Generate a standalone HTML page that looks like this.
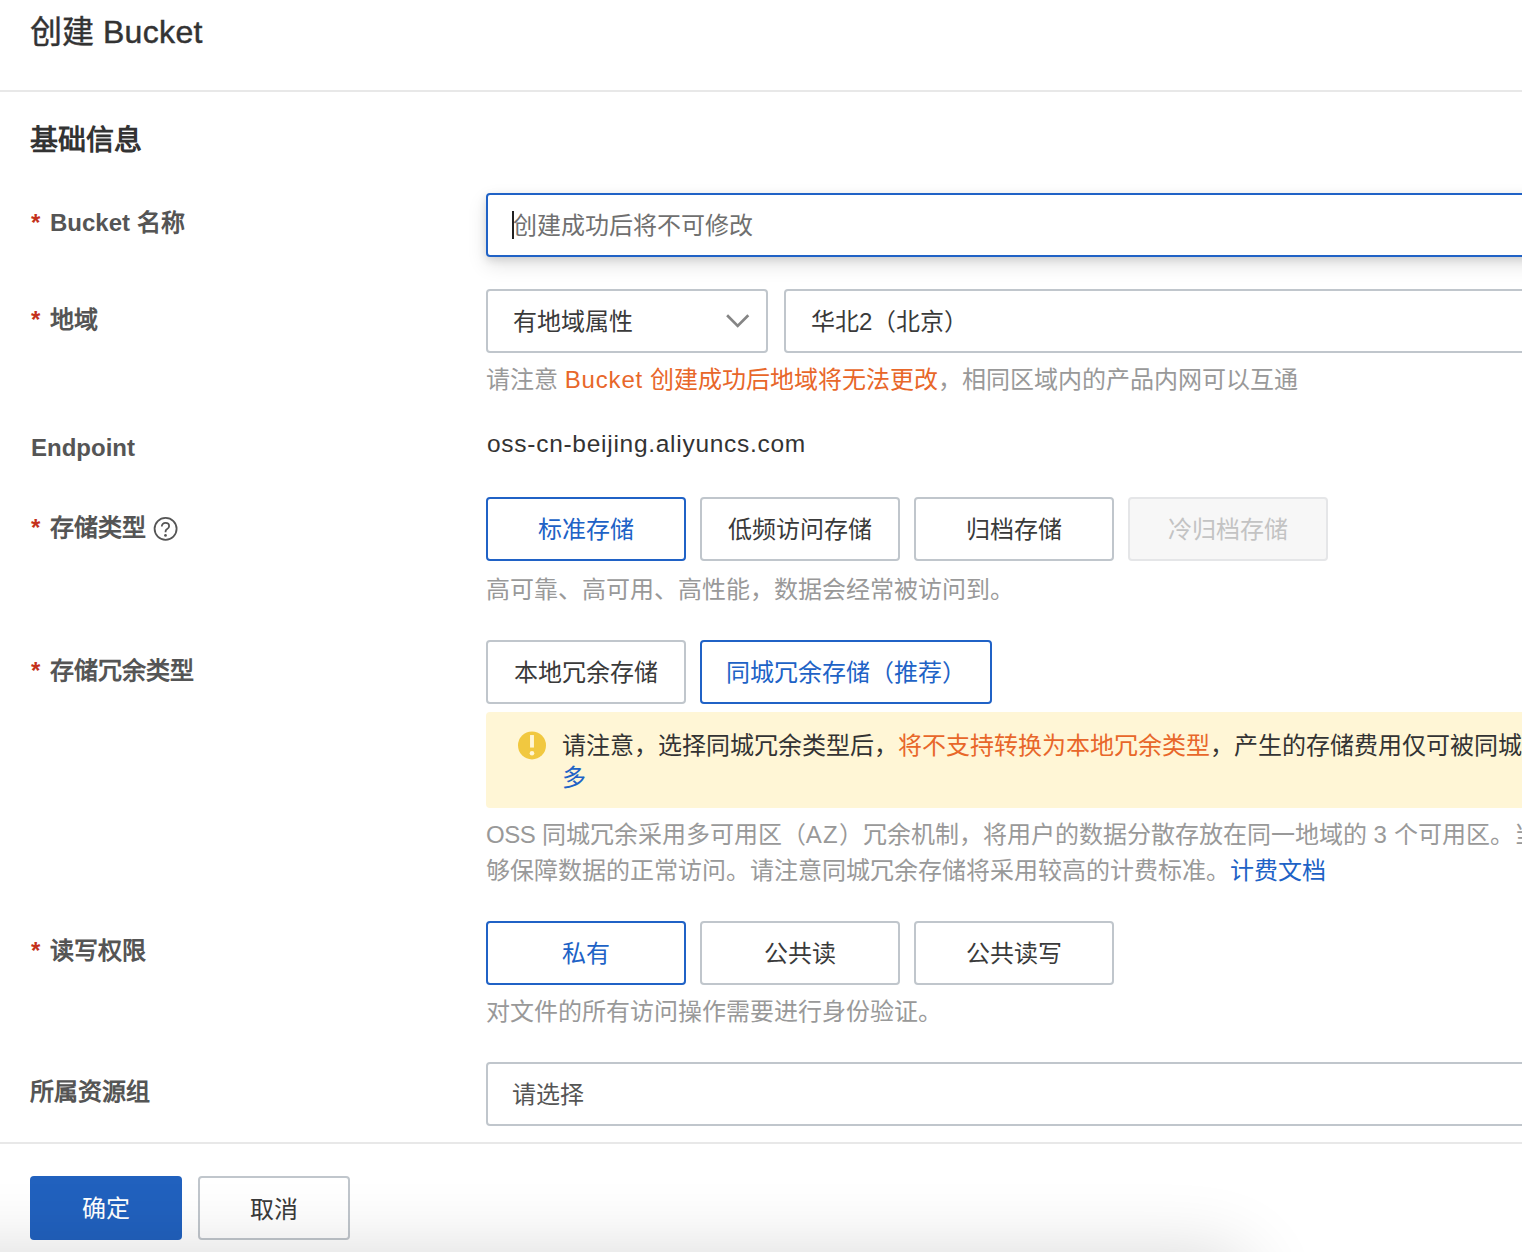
<!DOCTYPE html>
<html lang="zh-CN">
<head>
<meta charset="utf-8">
<title>创建 Bucket</title>
<style>
*{box-sizing:border-box;margin:0;padding:0}
html,body{width:1522px;height:1252px;overflow:hidden;background:#fff}
body{position:relative;font-family:"Liberation Sans",sans-serif;font-size:24px;color:#333;-webkit-font-smoothing:antialiased}
.abs{position:absolute;white-space:nowrap}
.title{left:30px;top:8px;font-size:32px;line-height:48px;color:#333;-webkit-text-stroke:0.45px #333}
.hr{left:0;width:1522px;height:2px;background:#e8e8e8}
.sec{left:30px;top:120px;font-size:28px;line-height:42px;font-weight:bold;color:#333}
.lab{left:30px;font-size:24px;line-height:36px;font-weight:bold;color:#555}
.lab .st{color:#c4311c;margin-right:10px;margin-left:1px;font-weight:bold;font-size:24px;display:inline-block;width:9px;position:relative;top:0px;line-height:1}
.help{left:486px;font-size:24px;line-height:36px;color:#999}
.or{color:#e8672a}
.lk{color:#2062c6}
.box{border:2px solid #c0c6cc;border-radius:4px;background:#fff;height:64px;line-height:62px;font-size:24px;color:#3a3a3a}
.btn{text-align:center;width:200px;line-height:62px}
.btn.on{border-color:#2062c6;color:#2062c6}
.btn.dis{background:#f7f7f7;border-color:#e5e6e8;color:#c3c3c3}
.focus{border-color:#2062c6;box-shadow:0 3px 8px rgba(0,0,0,.12),0 8px 20px rgba(0,0,0,.11);padding-left:25px}
.caret{position:absolute;left:24px;top:16px;width:2px;height:28px;background:#222}
.ph{color:#707070}
.chev{position:absolute;right:15px;top:22px}
.val{font-size:24px;line-height:36px;color:#333}
.warn{background:#fff6d6;border-radius:4px}
.wt{font-size:24px;line-height:34px;color:#333}
.foot{left:0;top:1144px;width:1522px;height:108px;background:#fff}
.ok{left:30px;top:1176px;width:152px;height:64px;line-height:66px;border-radius:4px;background:#2161be;color:#fff;text-align:center;font-size:24px}
.cancel{color:#3a3a3a;line-height:64px}
.shade{left:-300px;top:1254px;width:1548px;height:300px;border-radius:30px;box-shadow:0 0 75px 0 rgba(0,0,0,.16);pointer-events:none}
</style>
</head>
<body>
<div class="abs title">创建 <span style="letter-spacing:.35px">Bucket</span></div>
<div class="abs hr" style="top:90px"></div>
<div class="abs sec">基础信息</div>

<!-- Bucket name -->
<div class="abs lab" style="top:205px"><span class="st">*</span>Bucket 名称</div>
<div class="abs box focus" style="left:486px;top:193px;width:1100px"><span class="caret"></span><span class="ph">创建成功后将不可修改</span></div>

<!-- Region -->
<div class="abs lab" style="top:302px"><span class="st">*</span>地域</div>
<div class="abs box" style="left:486px;top:289px;width:282px;padding-left:25px">有地域属性
  <svg class="chev" width="26" height="16" viewBox="0 0 26 16"><path d="M2.1 2.3 L12.7 12.9 L23.3 2.3" fill="none" stroke="#858585" stroke-width="2.7"/></svg>
</div>
<div class="abs box" style="left:784px;top:289px;width:800px;padding-left:25px">华北2（北京）</div>
<div class="abs help" style="top:362px">请注意 <span class="or"><span style="letter-spacing:.85px">Bucket</span> 创建成功后地域将无法更改</span>，相同区域内的产品内网可以互通</div>

<!-- Endpoint -->
<div class="abs lab" style="top:430px;left:31px">Endpoint</div>
<div class="abs val" style="left:487px;top:426px;font-size:24.5px;letter-spacing:0.72px">oss-cn-beijing.aliyuncs.com</div>

<!-- Storage class -->
<div class="abs lab" style="top:510px"><span class="st">*</span>存储类型</div>
<svg class="abs" style="left:152px;top:515px" width="28" height="28" viewBox="0 0 28 28"><g transform="translate(0.6,0.8)"><circle cx="13" cy="13" r="11" fill="none" stroke="#555" stroke-width="1.8"/><path d="M9.2 10.6 C9.2 8.5 10.8 7.1 12.9 7.1 C15 7.1 16.5 8.5 16.5 10.4 C16.5 12.3 15 13 13.9 13.7 C13.1 14.2 12.9 14.8 12.9 16.4" fill="none" stroke="#555" stroke-width="1.8"/><circle cx="12.9" cy="19.6" r="1.35" fill="#555"/></g></svg>
<div class="abs box btn on"  style="left:486px;top:497px">标准存储</div>
<div class="abs box btn"     style="left:700px;top:497px">低频访问存储</div>
<div class="abs box btn"     style="left:914px;top:497px">归档存储</div>
<div class="abs box btn dis" style="left:1128px;top:497px">冷归档存储</div>
<div class="abs help" style="top:572px">高可靠、高可用、高性能，数据会经常被访问到。</div>

<!-- Redundancy -->
<div class="abs lab" style="top:653px"><span class="st">*</span>存储冗余类型</div>
<div class="abs box btn"    style="left:486px;top:640px">本地冗余存储</div>
<div class="abs box btn on" style="left:700px;top:640px;width:292px">同城冗余存储（推荐）</div>
<div class="abs warn" style="left:486px;top:712px;width:1100px;height:96px">
  <svg class="abs" style="left:31px;top:18px" width="31" height="31" viewBox="0 0 31 31"><g transform="translate(0,0.45)"><circle cx="15" cy="15" r="14" fill="#f1c840"/><rect x="13.05" y="4.6" width="3.9" height="12.5" fill="#fff6d6"/><circle cx="15" cy="22.8" r="2.3" fill="#fff6d6"/></g></svg>
  <div class="abs wt" style="left:76px;top:17px">请注意，选择同城冗余类型后，<span class="or">将不支持转换为本地冗余类型</span>，产生的存储费用仅可被同城冗余存储包抵扣。<span style="color:#2062c6">了解更</span></div>
  <div class="abs wt" style="left:76px;top:49px;color:#2062c6">多</div>
</div>
<div class="abs help" style="top:817px"><span style="letter-spacing:-.5px">OSS</span> 同城冗余采用多可用区（<span style="letter-spacing:1.2px">AZ</span>）冗余机制，将用户的数据分散存放在同一地域的 3 个可用区。当某个可用区不可用时，仍然能</div>
<div class="abs help" style="top:853px">够保障数据的正常访问。请注意同城冗余存储将采用较高的计费标准。<span class="lk">计费文档</span></div>

<!-- ACL -->
<div class="abs lab" style="top:933px"><span class="st">*</span>读写权限</div>
<div class="abs box btn on" style="left:486px;top:921px">私有</div>
<div class="abs box btn"    style="left:700px;top:921px">公共读</div>
<div class="abs box btn"    style="left:914px;top:921px">公共读写</div>
<div class="abs help" style="top:994px">对文件的所有访问操作需要进行身份验证。</div>

<!-- Resource group -->
<div class="abs lab" style="top:1074px">所属资源组</div>
<div class="abs box" style="left:486px;top:1062px;width:1100px;padding-left:24px;color:#555">请选择</div>

<!-- Footer -->
<div class="abs foot"></div>
<div class="abs hr" style="top:1142px"></div>
<div class="abs ok">确定</div>
<div class="abs box btn cancel" style="left:198px;top:1176px;width:152px">取消</div>
<div class="abs shade"></div>
</body>
</html>
